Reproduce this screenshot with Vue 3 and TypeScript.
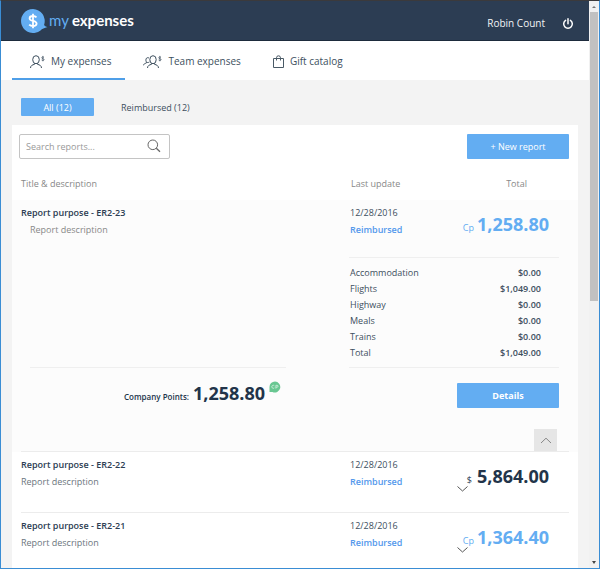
<script setup lang="ts">
import { computed, ref } from 'vue'

interface Line {
  label: string
  amount: string
}

interface Report {
  id: string
  date: string
  status: string
  unit: 'Cp' | '$'
  total: string
  lines: Line[]
}

const tabs = [
  { id: 'mine', label: 'My expenses' },
  { id: 'team', label: 'Team expenses' },
  { id: 'gift', label: 'Gift catalog' },
]
const filters = [
  { id: 'all', label: 'All (12)' },
  { id: 'reimbursed', label: 'Reimbursed (12)' },
]

const lines: Line[] = [
  { label: 'Accommodation', amount: '$0.00' },
  { label: 'Flights', amount: '$1,049.00' },
  { label: 'Highway', amount: '$0.00' },
  { label: 'Meals', amount: '$0.00' },
  { label: 'Trains', amount: '$0.00' },
  { label: 'Total', amount: '$1,049.00' },
]

const reports: Report[] = [
  { id: 'ER2-23', date: '12/28/2016', status: 'Reimbursed', unit: 'Cp', total: '1,258.80', lines },
  { id: 'ER2-22', date: '12/28/2016', status: 'Reimbursed', unit: '$', total: '5,864.00', lines },
  { id: 'ER2-21', date: '12/28/2016', status: 'Reimbursed', unit: 'Cp', total: '1,364.40', lines },
]

const activeTab = ref('mine')
const activeFilter = ref('all')
const openId = ref<string | null>('ER2-23')
const query = ref('')

const visible = computed(() =>
  reports.filter((r) => `report purpose - ${r.id}`.toLowerCase().includes(query.value.toLowerCase())),
)
</script>

<template>
  <div class="window">
    <div class="page">
      <header class="top">
        <a class="logo" href="#">
          <svg width="27" height="24" viewBox="0 0 27 24" aria-hidden="true">
            <path d="M12 0a12 12 0 1 0 7.500 21.400c1.500-1.500 4-2.600 7-3.400-1.800-.1-2.800-.9-3.400-2.200A12 12 0 0 0 12 0z" fill="#63adf2" />
            <path d="M15.500 8.300c-.9-.9-2.100-1.300-3.500-1.300-2 0-3.400.9-3.400 2.400 0 3.400 7 1.700 7 5.200 0 1.600-1.500 2.500-3.600 2.500-1.500 0-2.900-.5-3.800-1.400M12 4.800v14.400" fill="none" stroke="#fff" stroke-width="1.800" />
          </svg>
          <span class="my">my</span><span class="exp">expenses</span>
        </a>
        <span class="user">Robin Count</span>
        <button class="power" type="button" aria-label="Log out">
          <svg width="12" height="12" viewBox="0 0 12 12" aria-hidden="true">
            <path d="M3.600 2.300a4.300 4.300 0 1 0 4.800 0M6 .8v5" fill="none" stroke="#fff" stroke-width="1.500" stroke-linecap="round" />
          </svg>
        </button>
      </header>

      <nav class="tabs">
        <a
          v-for="tab in tabs"
          :key="tab.id"
          href="#"
          class="tab"
          :class="{ active: tab.id === activeTab }"
          @click.prevent="activeTab = tab.id"
        >
          <svg v-if="tab.id === 'mine'" width="15" height="14" viewBox="0 0 15 14" aria-hidden="true">
            <g fill="none" stroke="#3d4f5e" stroke-width="1">
              <ellipse cx="6" cy="4.700" rx="3.300" ry="4" />
              <path d="M4.500 8.300v1C2.300 9.900.6 10.600.5 13M7.500 8.300v1c2.200.6 3.900 1.300 4 3.700" />
              <path d="M14 2.400c-1.200-.8-2.400-.4-2.300.5.1 1 2.400.6 2.400 1.700 0 .9-1.500 1.200-2.500.4M12.900.9v5.400" stroke-width=".7" />
            </g>
          </svg>
          <svg v-else-if="tab.id === 'team'" width="19" height="14" viewBox="0 0 19 14" aria-hidden="true">
            <g fill="none" stroke="#3d4f5e" stroke-width="1">
              <ellipse cx="10" cy="4.700" rx="3.200" ry="4" />
              <path d="M8.500 8.300v1c-2.200.6-3.900 1.300-4 3.700M11.500 8.300v1c2.200.6 3.900 1.300 4 3.700" />
              <path d="M6 3.100C5 2.300 3.500 2.600 3.100 3.900 2.700 5.100 2.900 6.400 3.700 7.200L3.400 8C1.700 8.500.7 9 .5 10.300M3.700 7.200c1 .6 1.900.3 2.700-.2" />
              <path d="M18 2.400c-1.200-.8-2.400-.4-2.300.5.1 1 2.400.6 2.400 1.700 0 .9-1.500 1.200-2.500.4M16.900.9v5.400" stroke-width=".7" />
            </g>
          </svg>
          <svg v-else width="11" height="13" viewBox="0 0 11 13" aria-hidden="true">
            <path d="M.5 3.500h10v9H.5zM3.500 5.500V2.800a2 2 0 0 1 4 0v2.700" fill="none" stroke="#4a5a66" />
          </svg>
          {{ tab.label }}
        </a>
      </nav>

      <main class="body">
        <div class="filters">
          <button
            v-for="f in filters"
            :key="f.id"
            type="button"
            class="filter"
            :class="{ on: f.id === activeFilter }"
            @click="activeFilter = f.id"
          >
            {{ f.label }}
          </button>
        </div>

        <section class="card">
          <div class="tools">
            <label class="search">
              <input v-model="query" type="text" placeholder="Search reports..." aria-label="Search reports" />
              <svg width="14" height="14" viewBox="0 0 14 14" aria-hidden="true">
                <path d="M9.300 9.300l3.700 3.500" fill="none" stroke="#666" stroke-width="1.300" />
                <circle cx="5.800" cy="5.800" r="4.800" fill="none" stroke="#666" stroke-width="1" />
              </svg>
            </label>
            <button class="primary" type="button">+ New report</button>
          </div>

          <table class="reports">
            <thead>
              <tr class="cols">
                <th scope="col">Title &amp; description</th>
                <th scope="col" class="update">Last update</th>
                <th scope="col" class="sum">Total</th>
              </tr>
            </thead>
            <tbody v-for="r in visible" :key="r.id" :class="{ open: r.id === openId }">
              <tr class="cols row">
                <td>
                  <div class="title">Report purpose - {{ r.id }}</div>
                  <div class="desc">Report description</div>
                </td>
                <td>
                  <div>{{ r.date }}</div>
                  <a class="status" href="#">{{ r.status }}</a>
                </td>
                <td class="total">
                  <div class="amount" :class="{ points: r.unit === 'Cp' }">
                    <span class="unit">{{ r.unit }}</span>
                    <strong>{{ r.total }}</strong>
                  </div>
                  <button
                    v-if="r.id !== openId"
                    class="expand"
                    type="button"
                    :aria-label="`Show ${r.id}`"
                    @click="openId = r.id"
                  >
                    <svg width="12" height="6" viewBox="0 0 12 6" aria-hidden="true">
                      <path d="M.5.500 5.500 5 10.500.500" fill="none" stroke="#555" />
                    </svg>
                  </button>
                </td>
              </tr>
              <tr v-if="r.id === openId" class="detail">
                <td colspan="3">
                  <div class="split">
                    <div class="left"></div>
                    <div class="right">
                      <table class="lines">
                        <tbody>
                          <tr v-for="l in r.lines" :key="l.label">
                            <th scope="row">{{ l.label }}</th>
                            <td>{{ l.amount }}</td>
                          </tr>
                        </tbody>
                      </table>
                    </div>
                  </div>
                  <div class="actions">
                    <div class="company">
                      <span>Company Points:</span>
                      <strong>{{ r.total }}</strong>
                      <svg width="12" height="12" viewBox="0 0 12 12" aria-hidden="true">
                        <path d="M6 .5A5.500 5.500 0 1 1 3.500 11H.5V6A5.500 5.500 0 0 1 6 .500z" fill="#69c792" />
                        <path d="M5.300 4.700a1.500 1.500 0 1 0 0 2.200M6.900 7.600V4.300h1.200a.9.9 0 0 1 0 1.900H6.900" fill="none" stroke="#e2f6ea" stroke-width=".7" />
                      </svg>
                    </div>
                    <button class="primary bold" type="button">Details</button>
                  </div>
                  <button class="collapse" type="button" aria-label="Collapse" @click="openId = null">
                    <svg width="12" height="7" viewBox="0 0 12 7" aria-hidden="true">
                      <path d="M1 6l5-4.800L11 6" fill="none" stroke="#888" />
                    </svg>
                  </button>
                </td>
              </tr>
            </tbody>
          </table>
        </section>
      </main>
    </div>

    <div class="scroll" aria-hidden="true">
      <svg width="8" height="11" viewBox="0 0 8 11"><path d="M2 7l2-2 2 2z" fill="#777" /></svg>
      <div class="track"><div class="thumb"></div></div>
      <svg width="8" height="11" viewBox="0 0 8 11"><path d="M2 4h4l-2 3z" fill="#444" /></svg>
    </div>
  </div>
</template>

<style>
body {
  background: #f3f3f3;
}
</style>

<style scoped>
* {
  box-sizing: border-box;
}
.window {
  display: flex;
  height: 100vh;
  border: 1px solid #3a8dd4;
  border-top-color: #3b3a3c;
  background: #fff;
  font: 9px/17px 'Open Sans', 'Noto Sans', sans-serif;
  color: #3d4f5e;
}
.page {
  flex: 1;
  min-width: 0;
  overflow: hidden;
  background: #f3f3f3;
}
button {
  border: 0;
  padding: 0;
  background: none;
  font: inherit;
  color: inherit;
  cursor: pointer;
}
a {
  color: inherit;
  text-decoration: none;
}
svg {
  display: block;
  flex: none;
}
.top {
  display: flex;
  align-items: center;
  height: 40px;
  padding: 0 15px 0 20px;
  background: #2c3d53;
  border-bottom: 1px solid #1d2b3c;
  color: #f2f4f6;
  font-size: 10px;
}
.logo {
  display: flex;
  align-items: center;
  margin-right: auto;
  font: 700 15px/20px Lato, sans-serif;
}
.logo span {
  padding-bottom: 2px;
}
.my {
  margin: 0 3px 0 1px;
  color: #63adf2;
  font-weight: 400;
}
.exp {
  color: #fff;
}
.user {
  margin: 6px 17px 0 0;
}
.power {
  margin-top: 6px;
}
.tabs {
  display: flex;
  height: 39px;
  padding-left: 11px;
  background: #fff;
}
.tab {
  display: flex;
  align-items: center;
  gap: 6px;
  padding: 4px 14px 0 18px;
  border-bottom: 2px solid transparent;
  font-size: 10px;
}
.tab.active {
  border-bottom-color: #4f9fe8;
}
.body {
  padding: 18px 11px 0;
}
.filters {
  display: flex;
  padding-left: 9px;
  margin-bottom: 9px;
}
.filter {
  height: 18px;
  padding: 0 22px;
  border-radius: 1px;
}
.filter.on {
  background: #63adf2;
  color: #fff;
}
.filter:first-child {
  min-width: 73px;
  margin-right: 5px;
}
.card {
  min-height: 100vh;
  background: #fff;
}
.tools {
  display: flex;
  justify-content: space-between;
  padding: 9px 9px 0 7px;
}
.search {
  display: flex;
  align-items: center;
  width: 151px;
  height: 25px;
  padding: 0 8px 2px 6px;
  border: 1px solid #c4c4c4;
  border-radius: 2px;
}
.search input {
  flex: 1;
  min-width: 0;
  padding: 2px 0 0;
  border: 0;
  outline: 0;
  background: none;
  font: inherit;
  color: inherit;
}
.search input::placeholder {
  color: #999;
  opacity: 1;
}
.primary {
  width: 102px;
  height: 25px;
  border-radius: 1px;
  background: #63adf2;
  color: #fff;
}
.bold {
  font-weight: 700;
}
.reports,
.reports > thead,
.reports > tbody {
  display: block;
}
.reports > thead,
.reports > tbody {
  padding: 0 9px;
}
.cols {
  display: grid;
  grid-template-columns: 1fr 107px 112px;
}
th,
td {
  padding: 0;
  text-align: left;
  font-weight: 400;
}
.reports > thead th {
  padding: 16px 0 8px;
  color: #888;
}
.reports > thead .update {
  padding-left: 1px;
}
.reports > thead .sum {
  padding-right: 42px;
  text-align: right;
}
.row {
  height: 61px;
  padding-top: 4px;
  border-bottom: 1px solid #ececec;
}
.title {
  font-weight: 600;
  color: #2c3d53;
}
.desc {
  color: #6b757d;
}
.status {
  font-weight: 600;
  color: #5398ec;
}
.total {
  padding-top: 8px;
}
.amount {
  display: flex;
  align-items: baseline;
  justify-content: flex-end;
  gap: 3px;
  height: 22px;
  padding-right: 20px;
  line-height: 24px;
  color: #2c3d53;
}
.unit {
  margin-right: 2px;
}
.amount strong,
.company strong {
  font-size: 18px;
  font-weight: 700;
}
.amount strong {
  color: #22344a;
}
.points,
.amount.points strong {
  color: #63adf2;
}
.points .unit {
  margin-right: 0;
}
.open {
  background: #fcfcfc;
}
.open .row {
  height: 57px;
  border-bottom: 0;
}
.open .desc {
  padding-left: 9px;
  color: #888;
}
.detail {
  display: block;
  border-bottom: 1px solid #ececec;
}
.detail > td {
  display: block;
}
.split {
  display: grid;
  grid-template-columns: 1fr 210px;
  gap: 63px;
  padding: 0 10px 0 9px;
}
.left {
  border-bottom: 1px solid #efefef;
}
.right {
  padding: 7px 18px 6px 1px;
  border: 1px solid #efefef;
  border-width: 1px 0;
}
.lines {
  width: 100%;
  border-spacing: 0;
  line-height: 16px;
}
.lines td {
  text-align: right;
  font-weight: 600;
}
.actions {
  display: flex;
  justify-content: space-between;
  align-items: center;
  padding: 13px 10px 20px 103px;
}
.company {
  display: flex;
  align-items: baseline;
  gap: 4px;
  line-height: 24px;
  font-weight: 600;
  font-size: 8px;
  color: #22344a;
}
.company svg {
  align-self: flex-start;
}
.expand {
  display: block;
}
.collapse {
  display: flex;
  align-items: center;
  justify-content: center;
  width: 23px;
  height: 22px;
  margin: 0 12px 0 auto;
  background: #e6e6e6;
}
.scroll {
  display: flex;
  flex-direction: column;
  width: 10px;
  padding: 0 1px;
  background: #f1f1f1;
}
.track {
  flex: 1;
}
.thumb {
  height: 53%;
  background: #c1c1c1;
}
</style>
